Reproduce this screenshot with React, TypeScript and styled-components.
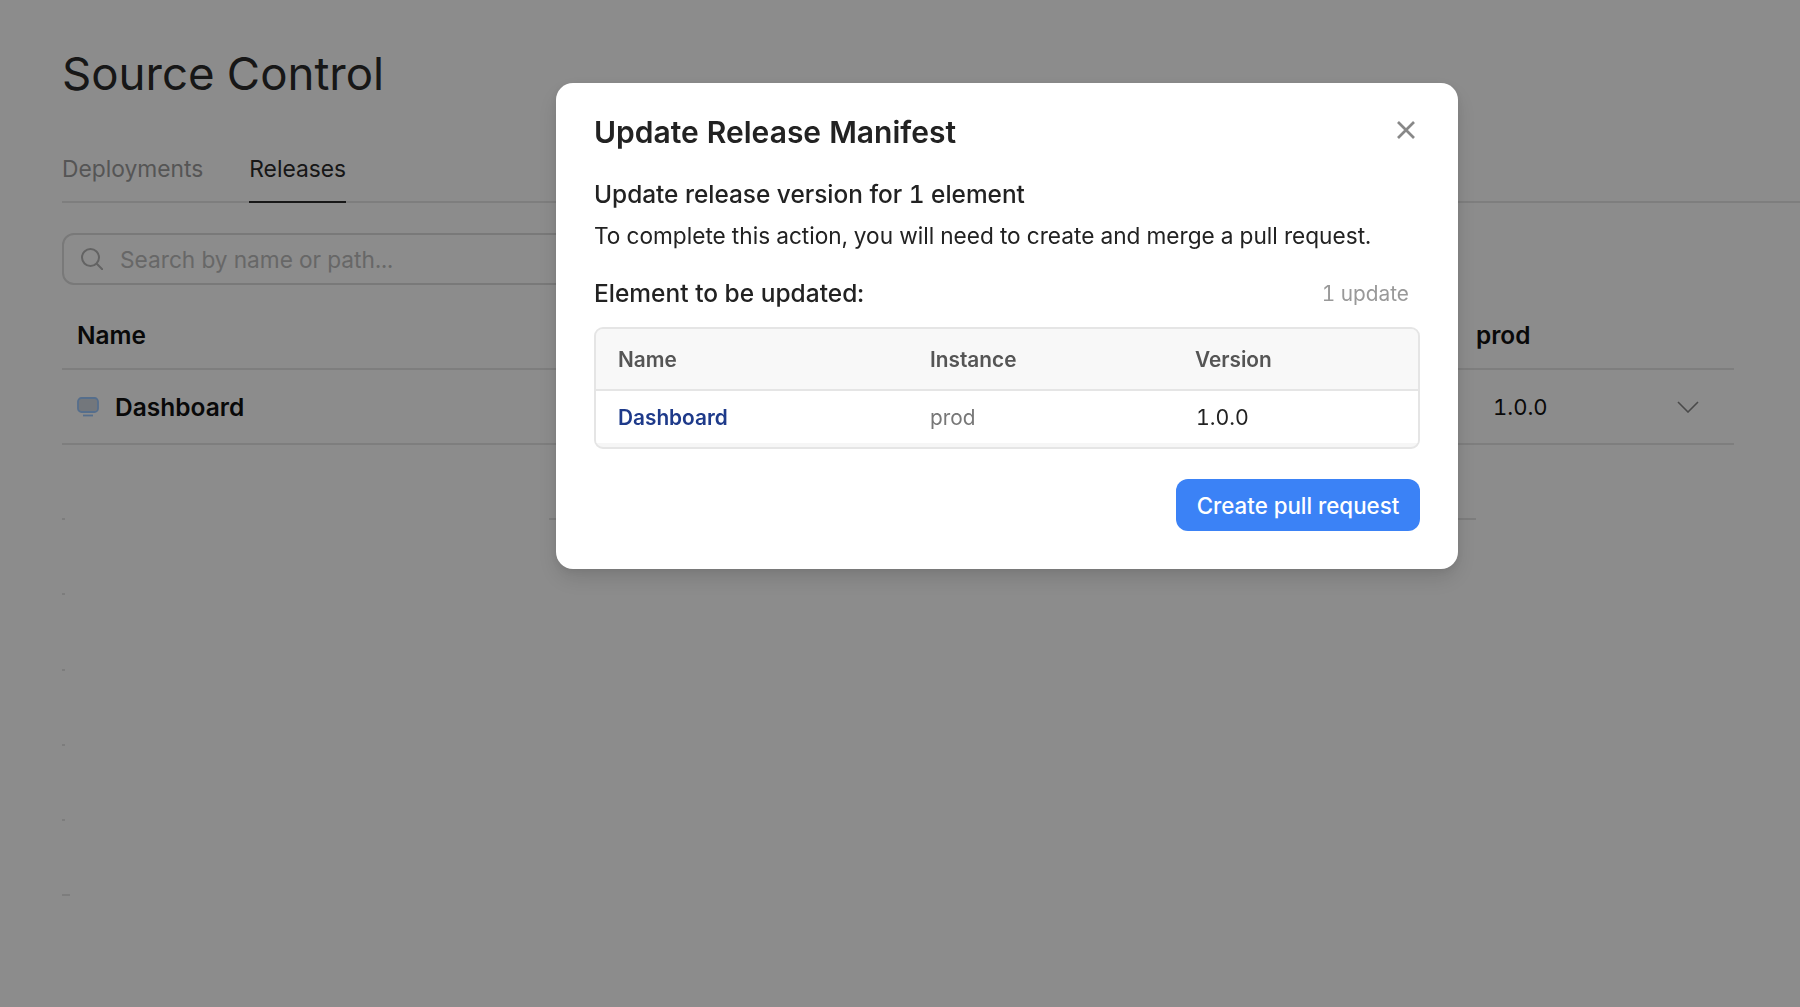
import React from "react";
import styled, { createGlobalStyle } from "styled-components";

const Global = createGlobalStyle`
  * { box-sizing: border-box; }
  html, body { margin: 0; padding: 0; height: 100%; background: #fff; overflow: hidden; }
  body { font-family: Inter, "Liberation Sans", sans-serif; font-variant-numeric: tabular-nums; }
`;

const Page = styled.div`
  height: 1007px;
  padding: 50px 0 0 62px;
  background: #fff;
  overflow: hidden;
`;
const PageTitle = styled.h1`
  margin: 0;
  font-size: 45.6px;
  line-height: 48px;
  font-weight: 400;
  color: #2b2b2b;
`;
const Tabs = styled.div`
  display: flex;
  gap: 46px;
  margin-top: 37px;
  border-bottom: 2px solid #e6e6e6;
  height: 68px;
`;
const Tab = styled.div<{ $active?: boolean }>`
  height: 68px;
  line-height: 68px;
  font-size: 22.8px;
  color: ${(p) => (p.$active ? "#2b2b2b" : "#9c9c9c")};
  border-bottom: 2px solid ${(p) => (p.$active ? "#2b2b2b" : "transparent")};
`;
const SearchBox = styled.div`
  display: flex;
  align-items: center;
  gap: 17px;
  width: 640px;
  height: 52px;
  margin-top: 30px;
  padding-left: 17px;
  border: 2px solid #dcdcdc;
  border-radius: 12px;
  font-size: 22.7px;
  color: #bcbcbc;
`;
const Table = styled.div`
  margin-right: 66px;
`;
const HeadRow = styled.div`
  display: grid;
  grid-template-columns: 1fr 258px;
  height: 85px;
  padding: 33px 0 0 15px;
  border-bottom: 2px solid #e6e6e6;
  font-size: 24.4px;
  line-height: 34px;
  font-weight: 600;
  color: #111;
`;
const BodyRow = styled.div`
  display: grid;
  grid-template-columns: 1fr 184px 57px;
  align-items: center;
  height: 75px;
  padding-left: 15px;
  border-bottom: 2px solid #e6e6e6;
  font-size: 22px;
  color: #111;
`;
const NameCell = styled.div`
  display: flex;
  align-items: center;
  gap: 16px;
  font-weight: 600;
  font-size: 24.5px;
  padding-top: 1px;
`;
const SkeletonRow = styled.div`
  display: flex;
  align-items: flex-end;
  height: 75.2px;
`;
const Tick = styled.div<{ $w: number; $offset?: number }>`
  width: ${(p) => p.$w}px;
  height: 2px;
  margin-left: ${(p) => p.$offset ?? 0}px;
  background: #e4e4e4;
`;
const Overlay = styled.div`
  position: fixed;
  inset: 0;
  padding: 83px 0 0 556px;
  background: rgba(0, 0, 0, 0.45);
`;
const Modal = styled.div`
  width: 902px;
  height: 486px;
  padding: 32px 38px 38px;
  background: #fff;
  border-radius: 17px;
  box-shadow: 0 10px 22px rgba(0, 0, 0, 0.12), 0 2px 8px rgba(0, 0, 0, 0.08);
`;
const TitleRow = styled.div`
  display: flex;
  justify-content: space-between;
  align-items: center;
`;
const ModalTitle = styled.h2`
  margin: 0;
  font-size: 30px;
  line-height: 34px;
  font-weight: 600;
  color: #222;
`;
const CloseButton = styled.button`
  display: flex;
  padding: 0;
  margin: -5px 5px 0 0;
  border: 0;
  background: none;
  color: #888;
`;
const SubTitle = styled.div`
  margin-top: 30px;
  font-size: 24.4px;
  line-height: 30px;
  font-weight: 500;
  color: #222;
`;
const Description = styled.p`
  margin: 12px 0 0;
  font-size: 22.65px;
  line-height: 30px;
  color: #222;
`;
const SectionRow = styled.div`
  display: flex;
  justify-content: space-between;
  align-items: center;
  margin-top: 27px;
  padding-right: 11px;
  height: 30px;
`;
const SectionLabel = styled.div`
  font-size: 24.5px;
  font-weight: 500;
  color: #222;
`;
const Count = styled.div`
  font-size: 20.8px;
  color: #999;
`;
const UpdateTable = styled.div`
  height: 122px;
  margin-top: 19px;
  border: 2px solid #e5e5e5;
  border-radius: 9px;
  background: #f6f6f6;
  overflow: hidden;
`;
const UpdateRow = styled.div<{ $head?: boolean }>`
  display: grid;
  grid-template-columns: 312px 265px 1fr;
  align-items: center;
  height: ${(p) => (p.$head ? "62px" : "52px")};
  padding-left: 22px;
  background: ${(p) => (p.$head ? "#f8f8f8" : "#fff")};
  border-bottom: ${(p) => (p.$head ? "2px solid #e5e5e5" : "none")};
  font-size: 20.8px;
`;
const HeadCell = styled.div`
  font-weight: 600;
  color: #555;
`;
const LinkCell = styled.div`
  font-weight: 600;
  color: #1e3a8a;
`;
const InstanceCell = styled.div`
  color: #777;
`;
const VersionCell = styled.div`
  padding-left: 1px;
  font-size: 21.3px;
  color: #222;
`;
const Footer = styled.div`
  display: flex;
  justify-content: flex-end;
  margin-top: 30px;
`;
const PrimaryButton = styled.button`
  width: 244px;
  height: 52px;
  border: 0;
  border-radius: 12px;
  background: #3b82f6;
  color: #fff;
  font-family: inherit;
  font-size: 22.3px;
  font-weight: 500;
`;

const SearchIcon = () => (
  <svg width="22" height="22" viewBox="0 0 22 22" fill="none" stroke="#b4b4b4" strokeWidth="2">
    <circle cx="9.5" cy="9.5" r="8.5" />
    <path d="M16 16l5.2 5.2" strokeLinecap="round" />
  </svg>
);
const MonitorIcon = () => (
  <svg width="22" height="20" viewBox="0 0 22 20" fill="none">
    <rect x="1" y="1" width="20" height="14" rx="3.5" fill="#d2d9e2" stroke="#9cc8ff" strokeWidth="1.8" />
    <path d="M6 18.5h10" stroke="#9cc8ff" strokeWidth="1.8" />
  </svg>
);
const ChevronIcon = () => (
  <svg width="22" height="12" viewBox="0 0 22 12" fill="none" stroke="#888" strokeWidth="1.6">
    <path d="M1 1l10 10L21 1" />
  </svg>
);
const CloseIcon = () => (
  <svg width="18" height="18" viewBox="0 0 18 18" fill="none" stroke="currentColor" strokeWidth="2.7">
    <path d="M1 1l16 16M17 1L1 17" />
  </svg>
);

export default function App() {
  const ticks = [3, 3, 3, 3, 3, 8];
  return (
    <>
      <Global />
      <Page>
        <PageTitle>Source Control</PageTitle>
        <Tabs>
          <Tab>Deployments</Tab>
          <Tab $active>Releases</Tab>
        </Tabs>
        <SearchBox>
          <SearchIcon />
          Search by name or path...
        </SearchBox>
        <Table>
          <HeadRow>
            <div>Name</div>
            <div>prod</div>
          </HeadRow>
          <BodyRow>
            <NameCell>
              <MonitorIcon />
              Dashboard
            </NameCell>
            <div>1.0.0</div>
            <ChevronIcon />
          </BodyRow>
          {ticks.map((w, i) => (
            <SkeletonRow key={i}>
              <Tick $w={w} />
              {i === 0 && <Tick $w={927} $offset={484} />}
            </SkeletonRow>
          ))}
        </Table>
      </Page>
      <Overlay>
        <Modal>
          <TitleRow>
            <ModalTitle>Update Release Manifest</ModalTitle>
            <CloseButton aria-label="Close">
              <CloseIcon />
            </CloseButton>
          </TitleRow>
          <SubTitle>Update release version for 1 element</SubTitle>
          <Description>To complete this action, you will need to create and merge a pull request.</Description>
          <SectionRow>
            <SectionLabel>Element to be updated:</SectionLabel>
            <Count>1 update</Count>
          </SectionRow>
          <UpdateTable>
            <UpdateRow $head>
              <HeadCell>Name</HeadCell>
              <HeadCell>Instance</HeadCell>
              <HeadCell>Version</HeadCell>
            </UpdateRow>
            <UpdateRow>
              <LinkCell>Dashboard</LinkCell>
              <InstanceCell>prod</InstanceCell>
              <VersionCell>1.0.0</VersionCell>
            </UpdateRow>
          </UpdateTable>
          <Footer>
            <PrimaryButton>Create pull request</PrimaryButton>
          </Footer>
        </Modal>
      </Overlay>
    </>
  );
}
